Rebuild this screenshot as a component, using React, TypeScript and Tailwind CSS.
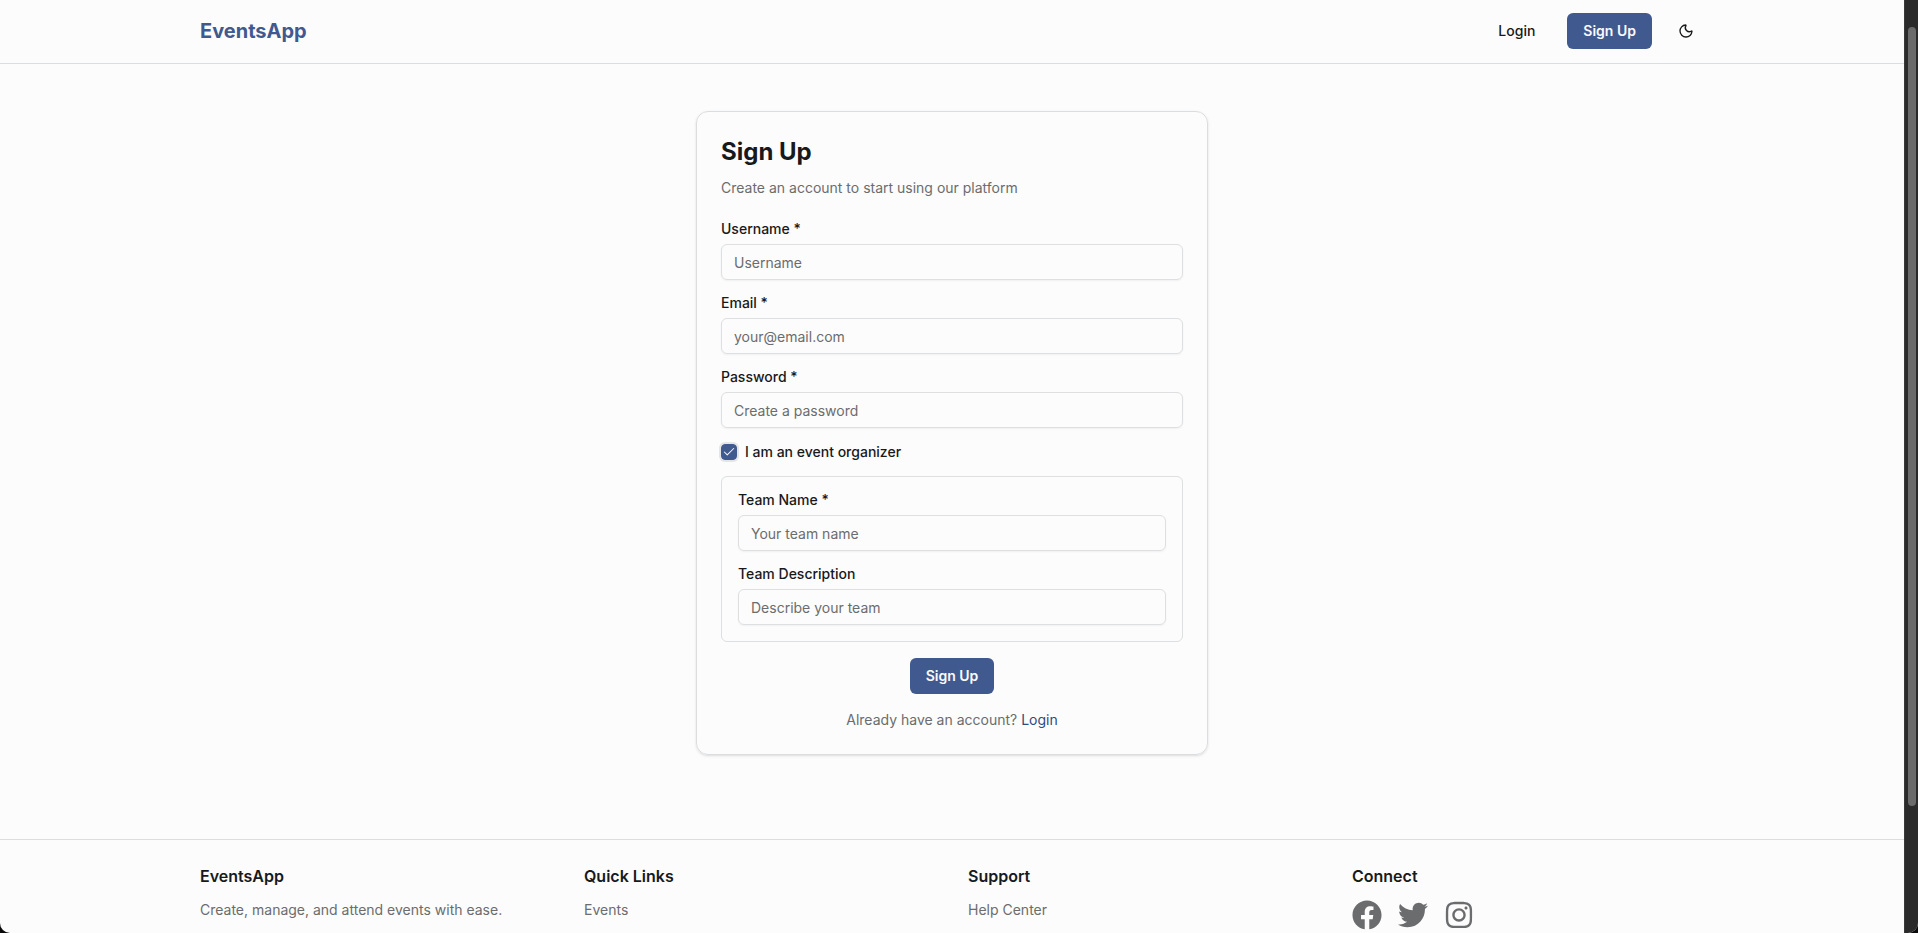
import { useState } from "react";
import type { InputHTMLAttributes, ReactNode } from "react";
import { Check, Moon } from "lucide-react";
import { FaFacebook, FaInstagram, FaTwitter } from "react-icons/fa";

const primaryButton =
  "h-9 rounded-md bg-[#40598f] px-4 text-sm font-semibold text-[#fafafa] flex items-center justify-center";

type FieldProps = InputHTMLAttributes<HTMLInputElement> & { id: string; label: string };

function Field({ id, label, ...rest }: FieldProps) {
  return (
    <div className="flex flex-col gap-2">
      <label htmlFor={id} className="text-sm leading-none font-medium">
        {label}
      </label>
      <input
        id={id}
        className="h-9 w-full rounded-md border border-[#dddfe0] bg-transparent px-3 text-sm shadow-xs outline-none placeholder:text-[#6b6c6e]"
        {...rest}
      />
    </div>
  );
}

function Header() {
  return (
    <header className="border-b border-[#dcdddf]">
      <div className="mx-auto flex max-w-[1536px] items-center justify-between px-4 pt-[13px] pb-3.5">
        <a href="#" className="text-xl font-bold text-[#40598f]">
          EventsApp
        </a>
        <nav className="flex items-center gap-4">
          <a href="#login" className="flex h-9 items-center px-4 text-sm font-medium">
            Login
          </a>
          <a href="#signup" className={primaryButton}>
            Sign Up
          </a>
          <button type="button" aria-label="Toggle theme" className="flex size-9 items-center justify-center">
            <Moon className="size-4" />
          </button>
        </nav>
      </div>
    </header>
  );
}

function SignUpCard() {
  const [organizer, setOrganizer] = useState(true);
  return (
    <section className="w-full max-w-lg rounded-xl border border-[#dcdddf] p-6 shadow-sm">
      <div className="flex flex-col gap-2.5">
        <h1 className="text-2xl font-bold">Sign Up</h1>
        <p className="text-sm text-[#6b6c6e]">Create an account to start using our platform</p>
      </div>
      <form className="mt-6 flex flex-col gap-4" onSubmit={(e) => e.preventDefault()}>
        <Field id="username" label="Username *" placeholder="Username" />
        <Field id="email" label="Email *" type="email" placeholder="your@email.com" />
        <Field id="password" label="Password *" type="password" placeholder="Create a password" />
        <div className="flex items-center gap-2">
          <span className="grid size-4 rounded-sm ring-2 ring-[#e4e5e7]">
            <input
              id="organizer"
              type="checkbox"
              checked={organizer}
              onChange={(e) => setOrganizer(e.target.checked)}
              className="col-start-1 row-start-1 size-4 appearance-none rounded-sm border border-[#40598f] checked:bg-[#40598f]"
            />
            {organizer && (
              <Check
                strokeWidth={1.75}
                className="pointer-events-none col-start-1 row-start-1 size-3.5 place-self-center text-[#fafafa]"
              />
            )}
          </span>
          <label htmlFor="organizer" className="text-sm leading-none font-medium">
            I am an event organizer
          </label>
        </div>
        {organizer && (
          <div className="flex flex-col gap-4 rounded-md border border-[#dddfe0] p-4">
            <Field id="team-name" label="Team Name *" placeholder="Your team name" />
            <Field id="team-description" label="Team Description" placeholder="Describe your team" />
          </div>
        )}
        <button type="submit" className={`${primaryButton} self-center`}>
          Sign Up
        </button>
        <p className="text-center text-sm text-[#6b6c6e]">
          Already have an account?{" "}
          <a href="#login" className="text-[#2f4a80]">
            Login
          </a>
        </p>
      </form>
    </section>
  );
}

function FooterColumn({ title, children }: { title: string; children: ReactNode }) {
  return (
    <div className="flex flex-col gap-3">
      <h2 className="text-base font-semibold">{title}</h2>
      <div className="text-sm text-[#6b6c6e]">{children}</div>
    </div>
  );
}

function Footer() {
  return (
    <footer className="border-t border-[#dcdddf]">
      <div className="mx-auto grid max-w-[1536px] grid-cols-4 gap-8 px-4 py-6">
        <FooterColumn title="EventsApp">
          <p>Create, manage, and attend events with ease.</p>
        </FooterColumn>
        <FooterColumn title="Quick Links">
          <a href="#events">Events</a>
        </FooterColumn>
        <FooterColumn title="Support">
          <a href="#help">Help Center</a>
        </FooterColumn>
        <FooterColumn title="Connect">
          <div className="flex gap-4">
            <a href="#facebook" aria-label="Facebook">
              <FaFacebook size={30} />
            </a>
            <a href="#twitter" aria-label="Twitter">
              <FaTwitter size={30} />
            </a>
            <a href="#instagram" aria-label="Instagram">
              <FaInstagram size={30} />
            </a>
          </div>
        </FooterColumn>
      </div>
    </footer>
  );
}

export default function App() {
  return (
    <div className="h-screen overflow-hidden bg-[#0a0a0a] font-['Inter',sans-serif] text-[#18191b]">
      <div className="flex h-full overflow-hidden rounded-b-[10px] bg-[#fcfcfc]">
        <div className="min-w-0 flex-1 overflow-hidden">
          <Header />
          <main className="flex justify-center px-4 pt-[47px] pb-[84px]">
            <SignUpCard />
          </main>
          <Footer />
        </div>
        <div className="flex w-3.5 shrink-0 flex-col items-center border-l border-[#3a3a3a] bg-[#2b2b2b] pt-[27px]">
          <div className="h-[86%] w-2 rounded-full bg-[#6b6b6b]" />
        </div>
      </div>
    </div>
  );
}
